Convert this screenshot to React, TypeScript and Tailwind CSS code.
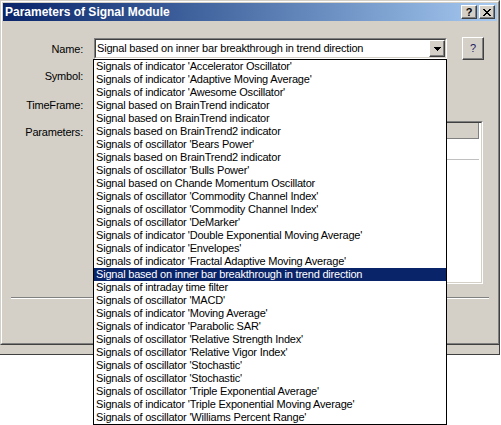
import { ReactNode } from 'react'

const modules = [
  "Signals of indicator 'Accelerator Oscillator'",
  "Signals of indicator 'Adaptive Moving Average'",
  "Signals of indicator 'Awesome Oscillator'",
  'Signal based on BrainTrend indicator',
  'Signal based on BrainTrend indicator',
  'Signals based on BrainTrend2 indicator',
  "Signals of oscillator 'Bears Power'",
  'Signals based on BrainTrend2 indicator',
  "Signals of oscillator 'Bulls Power'",
  'Signal based on Chande Momentum Oscillator',
  "Signals of oscillator 'Commodity Channel Index'",
  "Signals of oscillator 'Commodity Channel Index'",
  "Signals of oscillator 'DeMarker'",
  "Signals of indicator 'Double Exponential Moving Average'",
  "Signals of indicator 'Envelopes'",
  "Signals of indicator 'Fractal Adaptive Moving Average'",
  'Signal based on inner bar breakthrough in trend direction',
  'Signals of intraday time filter',
  "Signals of oscillator 'MACD'",
  "Signals of indicator 'Moving Average'",
  "Signals of indicator 'Parabolic SAR'",
  "Signals of oscillator 'Relative Strength Index'",
  "Signals of oscillator 'Relative Vigor Index'",
  "Signals of oscillator 'Stochastic'",
  "Signals of oscillator 'Stochastic'",
  "Signals of oscillator 'Triple Exponential Average'",
  "Signals of indicator 'Triple Exponential Moving Average'",
  "Signals of oscillator 'Williams Percent Range'",
]

const SELECTED = 16

const raised =
  'border border-t-white border-l-white border-r-[#404040] border-b-[#404040] shadow-[inset_-1px_-1px_0_#808080] bg-[#d4d0c8]'

function Label({ children }: { children: ReactNode }) {
  return <div className="w-[80px] text-right leading-[14px]">{children}</div>
}

export default function App() {
  return (
    <div className="relative w-[501px] h-[425px] bg-white overflow-hidden font-['Liberation_Sans',Arial,sans-serif] text-[11px] tracking-[-0.2px] text-black">
      {/* dialog */}
      <div className="w-[500px] h-[345px] border border-t-[#d4d0c8] border-l-[#d4d0c8] border-r-[#404040] border-b-[#404040]">
        <div className="h-full flex flex-col p-px bg-[#d4d0c8] border border-t-white border-l-white border-r-[#808080] border-b-[#808080]">
          <div className="h-[18px] flex items-center pl-[2px] pr-[2px] bg-linear-to-r from-[#0a246a] to-[#a6caf0]">
            <span className="flex-1 text-white font-bold text-[12px] tracking-normal">Parameters of Signal Module</span>
            <button className={`${raised} w-[16px] h-[14px] flex items-center justify-center font-bold text-[11px] leading-none`}>?</button>
            <button className={`${raised} ml-[2px] w-[16px] h-[14px] flex items-center justify-center`}>
              <svg width="8" height="7" viewBox="0 0 8 7" shapeRendering="crispEdges">
                <path d="M0 0h2v1h-2zM6 0h2v1h-2zM1 1h2v1h-2zM5 1h2v1h-2zM2 2h4v1h-4zM3 3h2v1h-2zM2 4h4v1h-4zM1 5h2v1h-2zM5 5h2v1h-2zM0 6h2v1h-2zM6 6h2v1h-2z" fill="#000" />
              </svg>
            </button>
          </div>

          <div className="flex-1 flex flex-col">
            {/* Name */}
            <div className="mt-[16px] h-[23px] flex items-center">
              <Label>Name:</Label>
              <div className="ml-[11px] w-[353px] h-[21px] flex items-center bg-white border border-t-[#808080] border-l-[#808080] border-r-white border-b-white">
                <div className="flex-1 h-full flex items-center border border-t-[#404040] border-l-[#404040] border-r-[#d4d0c8] border-b-[#d4d0c8]">
                  <span className="flex-1 pl-[1px]">Signal based on inner bar breakthrough in trend direction</span>
                  <div className={`${raised} w-[16px] h-full flex items-center justify-center`}>
                    <svg width="7" height="4" viewBox="0 0 7 4" shapeRendering="crispEdges">
                      <path d="M0 0h7v1h-7zM1 1h5v1h-5zM2 2h3v1h-3zM3 3h1v1h-1z" fill="#000" />
                    </svg>
                  </div>
                </div>
              </div>
              <button className={`${raised} ml-[15px] w-[22px] h-[23px] flex items-center justify-center text-[#1a1a60]`}>?</button>
            </div>

            {/* Symbol */}
            <div className="mt-[6px] h-[20px] flex items-center">
              <Label>Symbol:</Label>
            </div>

            {/* TimeFrame */}
            <div className="mt-[9px] h-[20px] flex items-center">
              <Label>TimeFrame:</Label>
            </div>

            {/* Parameters */}
            <div className="mt-[6px] flex items-start">
              <div className="pt-[4px]">
                <Label>Parameters:</Label>
              </div>
              <div className="ml-[11px] w-[389px] h-[163px] border border-t-[#808080] border-l-[#808080] border-r-white border-b-white">
                <div className="h-full flex flex-col bg-white border border-t-[#404040] border-l-[#404040] border-r-[#d4d0c8] border-b-[#d4d0c8]">
                  <div className="mr-[2px] h-[16px] bg-[#d4d0c8] border-r border-b border-r-[#808080] border-b-[#808080]" />
                  <div className="mr-[2px] h-[21px] border-b border-[#c0c0c0]" />
                </div>
              </div>
            </div>

            {/* separator */}
            <div className="mt-[13px] ml-[8px] w-[478px] h-[2px] border-t border-t-[#808080] border-b border-b-white" />
            <div className="flex-1" />
          </div>
        </div>
      </div>
      <div className="w-[500px] h-[10px] bg-[#d4d0c8] border-b border-r border-[#404040]" />

      {/* open dropdown list */}
      <div className="absolute left-[93px] top-[59px] w-[354px] bg-white border border-black">
        {modules.map((m, i) => (
          <div
            key={i}
            className={`h-[13px] leading-[13px] pl-[2px] whitespace-nowrap ${i === SELECTED ? 'bg-[#0a246a] text-white' : ''}`}
          >
            {m}
          </div>
        ))}
      </div>
    </div>
  )
}
